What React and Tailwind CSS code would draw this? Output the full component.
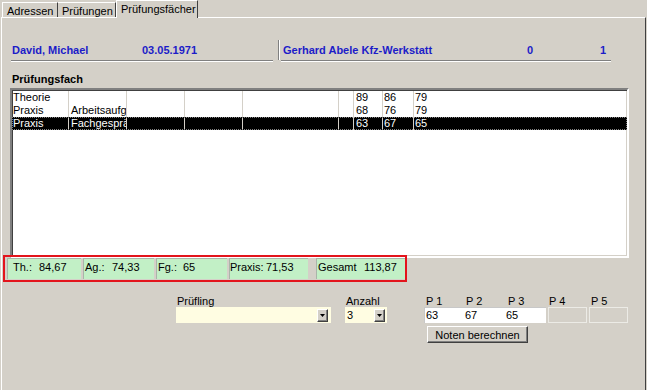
import React from "react";

const rows = [
  { a: "Theorie", b: "", n: ["89", "86", "79"] },
  { a: "Praxis", b: "Arbeitsaufgabe", n: ["68", "76", "79"] },
  { a: "Praxis", b: "Fachgespräch", n: ["63", "67", "65"], sel: true },
];

function DropBtn() {
  return (
    <div className="w-[11px] h-[13px] bg-[#d4d0c8] border-t border-l border-t-white border-l-white border-r border-b border-r-[#404040] border-b-[#404040] shadow-[inset_-1px_-1px_0_#808080] flex items-center justify-center">
      <svg width="5" height="3" viewBox="0 0 5 3">
        <path d="M0 0h5L2.5 3z" fill="#000" />
      </svg>
    </div>
  );
}

function Cell({ w, pl, label, lw, value }) {
  return (
    <div className={`h-full bg-[#c2f0c6] border-t border-l border-[#a9b5a9] flex items-start pt-[2px] ${w} ${pl}`}>
      <span className={`inline-block ${lw}`}>{label}</span>
      <span>{value}</span>
    </div>
  );
}

export default function App() {
  return (
    <div className="relative w-[647px] h-[390px] overflow-hidden bg-[#d4d0c8] text-black text-[11px] leading-[13px] font-['Liberation_Sans',Arial,sans-serif]">
      {/* Tabs */}
      <div className="relative z-10 -mb-px flex items-start h-[18px] pl-[2px]">
        <div className="mt-[2px] h-[15px] w-[56px] pl-[4px] pt-[2px] border-t border-l border-white border-r border-r-[#404040]">
          Adressen
        </div>
        <div className="mt-[2px] h-[15px] w-[58px] pl-[4px] pt-[2px] border-t border-r border-t-white border-r-[#404040]">
          Prüfungen
        </div>
        <div className="h-[18px] w-[82px] pl-[4px] pt-[2px] bg-[#d4d0c8] border-t border-l border-white border-r border-r-[#404040]">
          Prüfungsfächer
        </div>
      </div>

      {/* Panel */}
      <div className="ml-px w-[645px] h-[373px] border-t border-l border-white border-r border-r-[#404040]">
        {/* Header */}
        <div className="mt-[26px] ml-[9px] flex items-start font-bold text-[#1c1cc8]">
          <div className="w-[262px] flex pl-px pb-[3px] border-b border-[#808080] shadow-[0_1px_0_#fff]">
            <span className="w-[130px]">David, Michael</span>
            <span>03.05.1971</span>
          </div>
          <div className="ml-[5px] -mt-[4px] w-[2px] h-[20px] border-l border-[#808080] border-r border-r-white" />
          <div className="ml-px w-[330px] flex pl-[2px] pb-[3px] border-b border-[#808080] shadow-[0_1px_0_#fff]">
            <span className="w-[244px]">Gerhard Abele Kfz-Werkstatt</span>
            <span className="w-[73px]">0</span>
            <span>1</span>
          </div>
        </div>

        {/* List */}
        <div className="mt-[12px] ml-[10px] font-bold">Prüfungsfach</div>
        <div className="mt-[2px] ml-[8px] w-[619px] h-[170px] bg-white border-2 border-t-[#808080] border-l-[#808080] border-b-white border-r-white shadow-[inset_1px_1px_0_#404040,inset_-1px_-1px_0_#d4d0c8] pt-px">
          {rows.map((r, i) => (
            <div
              key={i}
              className={`flex h-[13px] whitespace-nowrap ${r.sel ? "bg-black text-white outline outline-1 outline-dotted outline-[#808080] -outline-offset-1" : ""}`}
            >
              <div className="w-[57px] pl-px border-r border-[#d4d0c8] overflow-hidden">{r.a}</div>
              <div className="w-[58px] pl-[2px] border-r border-[#d4d0c8] overflow-hidden">{r.b}</div>
              <div className="w-[58px] border-r border-[#d4d0c8]" />
              <div className="w-[58px] border-r border-[#d4d0c8]" />
              <div className="w-[96px] border-r border-[#d4d0c8]" />
              <div className="w-[15px] border-r border-[#d4d0c8]" />
              <div className="w-[29px] pl-[2px] border-r border-[#d4d0c8]">{r.n[0]}</div>
              <div className="w-[31px] pl-px border-r border-[#d4d0c8]">{r.n[1]}</div>
              <div className="flex-1 pl-px">{r.n[2]}</div>
            </div>
          ))}
        </div>

        {/* Summary bar */}
        <div className="ml-[5px] h-[21px] flex">
          <Cell w="w-[74px]" pl="pl-[5px]" label="Th.:" lw="w-[26px]" value="84,67" />
          <div className="w-[2px]" />
          <Cell w="w-[71px]" pl="pl-px" label="Ag.:" lw="w-[27px]" value="74,33" />
          <div className="w-[2px]" />
          <Cell w="w-[71px]" pl="pl-px" label="Fg.:" lw="w-[25px]" value="65" />
          <div className="w-[2px]" />
          <Cell w="w-[79px]" pl="pl-0" label="Praxis:" lw="w-[36px]" value="71,53" />
          <div className="w-[8px]" />
          <Cell w="w-[89px]" pl="pl-px" label="Gesamt" lw="w-[46px]" value="113,87" />
        </div>

        {/* Bottom controls */}
        <div className="mt-[16px] flex items-start leading-[12px]">
          <div className="ml-[174px] w-[155px]">
            <div className="pl-px">Prüfling</div>
            <div className="h-[16px] bg-[#fffde2] flex items-center justify-end pr-[3px]">
              <DropBtn />
            </div>
          </div>
          <div className="ml-[14px] w-[42px]">
            <div className="pl-px">Anzahl</div>
            <div className="h-[16px] bg-[#fffde2] flex items-center justify-between pl-[2px] pr-[2px] leading-[16px]">
              <span>3</span>
              <DropBtn />
            </div>
          </div>
          <div className="ml-[37px] flex flex-col">
            <div className="flex">
              <div className="w-[40px] pl-[2px]">P 1</div>
              <div className="w-[41px] pl-[2px]">P 2</div>
              <div className="w-[43px] pl-[3px]">P 3</div>
              <div className="w-[41px] pl-px">P 4</div>
              <div className="w-[39px] pl-[2px]">P 5</div>
            </div>
            <div className="flex h-[16px] leading-[14px]">
              <div className="w-[40px] bg-white border-t border-l border-[#c8c8c8] pl-px">63</div>
              <div className="w-[41px] bg-white border-t border-[#c8c8c8] pl-px">67</div>
              <div className="w-[41px] bg-white border-t border-[#c8c8c8] pl-px">65</div>
              <div className="ml-[2px] w-[39px] border border-[#ecebe6]" />
              <div className="ml-[2px] w-[39px] border border-[#ecebe6]" />
            </div>
            <div className="mt-[3px] ml-[3px] w-[101px] h-[17px] flex items-center justify-center border-t border-l border-white border-r border-b border-r-[#404040] border-b-[#404040] shadow-[inset_-1px_-1px_0_#808080]">
              Noten berechnen
            </div>
          </div>
        </div>
      </div>

      {/* Red highlight annotation */}
      <div className="absolute left-[3px] top-[255px] w-[404px] h-[27px] border-2 border-[#e3141c]" />
    </div>
  );
}
